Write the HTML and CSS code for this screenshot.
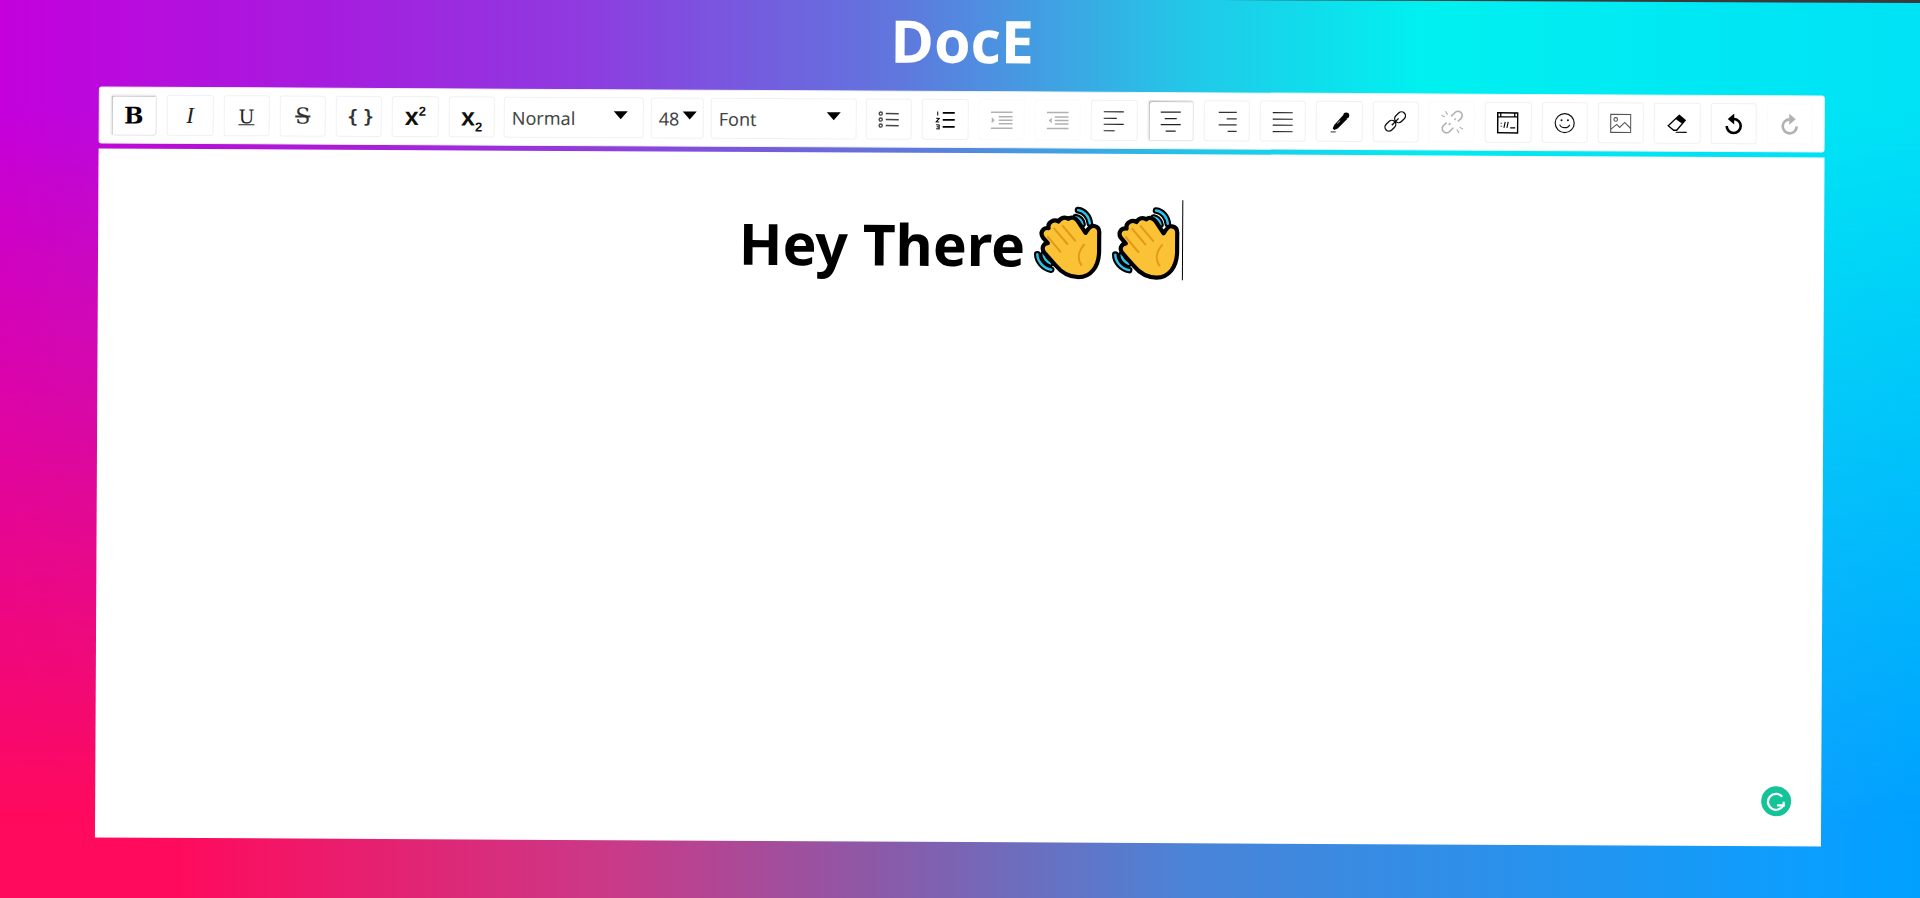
FILE: index.html
```html
<!DOCTYPE html>
<html lang="en">
<head>
    <meta charset="UTF-8">
    <title>DocE</title>
    <link rel="stylesheet" href="styles.css">
</head>
<body>
    <div class="top-edge"></div>
    <div class="page">
        <h1>DocE</h1>
        <div class="toolbar">
            <span class="opt active"><b class="ico-b">B</b></span>
            <span class="opt"><i class="ico-i">I</i></span>
            <span class="opt"><span class="ico-u">U</span></span>
            <span class="opt"><span class="ico-s">S</span></span>
            <span class="opt"><span class="ico-code">{ }</span></span>
            <span class="opt"><span class="ico-x">x<sup>2</sup></span></span>
            <span class="opt"><span class="ico-x">x<sub>2</sub></span></span>
            <span class="drop drop-block">Normal<span class="caret"></span></span>
            <span class="drop drop-size">48<span class="caret"></span></span>
            <span class="drop drop-font">Font<span class="caret"></span></span>

            <span class="opt">
                <svg class="icon" viewBox="0 0 22 18" stroke="#444" fill="none" stroke-width="1.3">
                    <circle cx="3" cy="3" r="1.6"/><circle cx="3" cy="9" r="1.6"/><circle cx="3" cy="15" r="1.6"/>
                    <path d="M8 3h13M8 9h13M8 15h13" stroke-width="1.5"/>
                </svg>
            </span>
            <span class="opt">
                <svg class="icon" viewBox="0 0 22 18" stroke="#000" fill="none">
                    <path d="M8 2h12M8 9h12M8 16h12" stroke-width="1.7"/>
                    <path d="M3 0.5v4M1.5 7.5h3l-3 3.5h3M1.5 14h3v4h-3M2 16h2" stroke-width="1"/>
                </svg>
            </span>
            <span class="opt off">
                <svg class="icon" viewBox="0 0 22 18" stroke="#000" fill="none" stroke-width="1.5">
                    <path d="M0 1h22M8 5.500h14M8 9h14M8 12.500h14M0 17h22"/>
                    <path d="M1 6l3 3-3 3z" fill="#000" stroke="none"/>
                </svg>
            </span>
            <span class="opt off">
                <svg class="icon" viewBox="0 0 22 18" stroke="#000" fill="none" stroke-width="1.5">
                    <path d="M0 1h22M8 5.500h14M8 9h14M8 12.500h14M0 17h22"/>
                    <path d="M5 6l-3 3 3 3z" fill="#000" stroke="none"/>
                </svg>
            </span>
            <span class="opt">
                <svg class="icon" viewBox="0 0 22 22" stroke="#222" fill="none" stroke-width="1.2">
                    <path d="M1 2h20M1 8.500h13M1 14.500h20M1 21h11"/>
                </svg>
            </span>
            <span class="opt active">
                <svg class="icon" viewBox="0 0 22 22" stroke="#222" fill="none" stroke-width="1.2">
                    <path d="M1 2h20M5 8.500h12M1 14.500h20M6 21h10"/>
                </svg>
            </span>
            <span class="opt">
                <svg class="icon" viewBox="0 0 22 22" stroke="#333" fill="none" stroke-width="1.3">
                    <path d="M3 2h18M11 8.500h10M3 14.500h18M12 21h9"/>
                </svg>
            </span>
            <span class="opt">
                <svg class="icon" viewBox="0 0 22 22" stroke="#222" fill="none" stroke-width="1.2">
                    <path d="M1 2h20M1 8.500h20M1 14.500h20M1 21h20"/>
                </svg>
            </span>
            <span class="opt">
                <svg class="icon" viewBox="0 0 22 22">
                    <path d="M14.500 4l4 4-9.500 9.500-3.500 1.500-1.500-1.500 1.500-3.500z" fill="#000"/>
                    <circle cx="17.500" cy="4.500" r="3"/>
                    <path d="M8.500 12.500l3-3" stroke="#fff" stroke-width="0.800"/>
                    <path d="M2 21h5" stroke="#555" stroke-width="1.200"/>
                </svg>
            </span>
            <span class="opt">
                <svg class="icon large" viewBox="0 0 22 22" stroke="#111" fill="none" stroke-width="1.200">
                    <rect x="1.500" y="11" width="10.500" height="7" rx="3.500" transform="rotate(-45 6.750 14.500)"/>
                    <rect x="10" y="3.500" width="10.500" height="7" rx="3.500" transform="rotate(-45 15.250 7)"/>
                    <path d="M8 14l6-6"/>
                </svg>
            </span>
            <span class="opt off">
                <svg class="icon large" viewBox="0 0 22 22" stroke="#000" fill="none" stroke-width="1.400">
                    <path d="M10 6l3-3a3.500 3.500 0 0 1 6 4.500l-3 3M12 16l-3 3a3.500 3.500 0 0 1-6-4.500l3-3M8 13.500l1.500-1.500M13 9l1-1"/>
                    <path d="M5 1.500l2 3M1.500 5l3 1.500M17 20.500l-2-3M20.500 17l-3-1.500" stroke-width="1"/>
                </svg>
            </span>
            <span class="opt">
                <svg class="icon" viewBox="0 0 22 22" stroke="#000" fill="none">
                    <rect x="1" y="1" width="20" height="20" stroke-width="1.500"/>
                    <path d="M1 5h20M4 1v4M18 1v4" stroke-width="1.300"/>
                    <path d="M4.500 11v.8M4.500 14v.8M8.500 10l-1.300 6M11.500 10l-1.300 6" stroke-width="1.100"/>
                    <path d="M13.500 16h5" stroke-width="1.300"/>
                </svg>
            </span>
            <span class="opt">
                <svg class="icon" viewBox="0 0 22 22" stroke="#111" fill="none" stroke-width="1.200">
                    <circle cx="11" cy="11" r="9.500"/>
                    <path d="M6 12.500c1.500 4 8.500 4 10 0"/>
                    <circle cx="7.800" cy="8" r="1" fill="#111" stroke="none"/>
                    <circle cx="14.200" cy="8" r="1" fill="#111" stroke="none"/>
                </svg>
            </span>
            <span class="opt">
                <svg class="icon" viewBox="0 0 22 22" stroke="#555" fill="none" stroke-width="1.100">
                    <rect x="1" y="2" width="20" height="18"/>
                    <circle cx="6" cy="7" r="1.800"/>
                    <path d="M1 17l6-5 3 3 5-5 6 6"/>
                </svg>
            </span>
            <span class="opt">
                <svg class="icon" viewBox="0 0 22 22">
                    <path d="M13.500 2.500l6 5-3 3.500-7-5z" fill="#000"/>
                    <path d="M13.500 2.500l6 5-8.500 10h-3l-5.500-4.500z" fill="none" stroke="#000" stroke-width="1.300"/>
                    <path d="M10 19.500h11" stroke="#000" stroke-width="1.200"/>
                </svg>
            </span>
            <span class="opt">
                <svg class="icon" viewBox="0 0 22 22" fill="none">
                    <path d="M11 6a7 7 0 1 1-7 7" stroke="#000" stroke-width="2.600"/>
                    <path d="M11.500 0.500v11L5 6z" fill="#000"/>
                </svg>
            </span>
            <span class="opt off">
                <svg class="icon" viewBox="0 0 22 22" fill="none">
                    <path d="M11 6a7 7 0 1 0 7 7" stroke="#000" stroke-width="2.600"/>
                    <path d="M10.500 0.500v11L17 6z" fill="#000"/>
                </svg>
            </span>
        </div>

        <div class="editor">
            <p class="line">
                <span class="hey">Hey There</span>
                <svg class="wave" viewBox="0 0 200 212">
                    <g id="hand" fill="none" stroke-linecap="round" stroke-linejoin="round">
                        <path d="M128 13c18 2 32 18 34 38M121 33c10 2 18 10 20 20" stroke="#000" stroke-width="19"/>
                        <path d="M128 13c18 2 32 18 34 38M121 33c10 2 18 10 20 20" stroke="#2dc3ec" stroke-width="7"/>
                        <path d="M12 140c0 20 18 40 40 44M30 140c0 10 8 22 20 26" stroke="#000" stroke-width="19"/>
                        <path d="M12 140c0 20 18 40 40 44M30 140c0 10 8 22 20 26" stroke="#2dc3ec" stroke-width="7"/>
                        <path d="M100 38C110 30 122 36 128 45L150 78C155 70 163 55 175 58C188 60 190 72 189 82L189 130C189 175 165 205 130 205C100 205 80 190 65 172L32 135C22 122 30 108 42 108L28 92C18 78 28 62 44 65C40 48 60 38 72 46C78 34 92 32 100 38Z" fill="#fcc236" stroke="#000" stroke-width="12"/>
                        <path d="M84 58l36 42M60 66l38 44M42 90l36 42M146 112c-16 18-20 40-8 58" stroke="#e39a1c" stroke-width="6"/>
                    </g>
                </svg>
                <svg class="wave" viewBox="0 0 200 212">
                    <use href="#hand"/>
                </svg>
                <span class="cursor"></span>
            </p>
            <span class="grammarly">
                <svg viewBox="0 0 30 30" fill="none" stroke="#fff" stroke-width="2.200">
                    <path d="M21 10.500a8 8 0 1 0 1 8.500h-6"/>
                    <path d="M22.500 15.500v5" />
                </svg>
            </span>
        </div>
    </div>
</body>
</html>
```

FILE: styles.css
```css
html, body { margin: 0; height: 898px; overflow: hidden; }
body {
    font-family: "Noto Sans", "Open Sans", sans-serif;
    position: relative;
    background: linear-gradient(90deg, #ff0a5c 0, #ff0a5c 9%, #c93a88 32%, #8a5aa8 46%, #4a84d8 62%, #0a9fff 95%, #00a0ff 100%);
}
/* top half of the background, faded into the bottom half */
body::before {
    content: "";
    position: absolute;
    inset: 0;
    background: linear-gradient(90deg, #c400dc 0, #a81ade 16%, #8f3ae0 30%, #5f78dd 47%, #22c8e8 62%, #00f0f0 74%, #00e2f6 100%);
    -webkit-mask-image: linear-gradient(180deg, #000 0, #000 12%, transparent 92%);
    mask-image: linear-gradient(180deg, #000 0, #000 12%, transparent 92%);
}
.top-edge {
    position: absolute;
    top: 0;
    right: 0;
    width: 700px;
    height: 3px;
    background: #3a3a3a;
    clip-path: polygon(0 0, 100% 0, 100% 100%);
}
.page {
    position: relative;
    height: 898px;
    padding-left: 97px;
    box-sizing: border-box;
    transform: rotate(0.3deg);
}
h1 {
    margin: 0;
    width: 1726px;
    height: 91px;
    line-height: 80px;
    text-align: center;
    color: #fff;
    font-family: "Open Sans", sans-serif;
    font-size: 59px;
    font-weight: 700;
}

.toolbar {
    width: 1726px;
    height: 57px;
    box-sizing: border-box;
    padding: 7px 0 0 11px;
    display: flex;
    align-items: flex-start;
    gap: 10px;
    background: #fff;
    border: 1px solid #f1f1f1;
    border-radius: 3px;
}
.opt {
    flex: none;
    width: 46.300px;
    height: 41px;
    box-sizing: border-box;
    display: flex;
    align-items: center;
    justify-content: center;
    background: #fff;
    border: 1px solid #f1f1f1;
    border-radius: 3px;
    color: #111;
}
.opt.active { box-shadow: 1px 1px 0 #bfbdbd inset; border-color: #e4e4e4; }
.opt.off { opacity: 0.3; }
.icon { width: 22px; height: 22px; display: block; }
.icon.large { width: 25px; height: 25px; }

.ico-b { font: 700 23px "DejaVu Serif", serif; color: #000; }
.ico-i { font: italic 400 23px "Liberation Serif", serif; color: #222; }
.ico-u { font: 400 19px "DejaVu Serif", serif; text-decoration: underline; color: #222; }
.ico-s { font: 400 22px "DejaVu Serif", serif; text-decoration: line-through; color: #333; }
.ico-code { font: 700 18px "DejaVu Sans Mono", monospace; color: #333; letter-spacing: -3px; }
.ico-x { font: 700 25px "Liberation Sans", sans-serif; color: #111; line-height: 1; }
.ico-x sup, .ico-x sub { font-size: 13px; line-height: 0; }

.drop {
    flex: none;
    height: 41px;
    box-sizing: border-box;
    display: flex;
    align-items: center;
    justify-content: space-between;
    margin-left: -1px;
    padding: 0 15px 0 7px;
    background: #fff;
    border: 1px solid #f1f1f1;
    border-radius: 3px;
    font-size: 18px;
    color: #444;
}
.drop-block { width: 140px; }
.drop-size { width: 53px; padding-right: 6px; margin-left: -3px; }
.drop-font { width: 146px; margin-left: -3px; margin-right: -1px; }
.caret {
    width: 0;
    height: 0;
    margin-bottom: 6px;
    border-left: 7px solid transparent;
    border-right: 7px solid transparent;
    border-top: 8px solid #000;
}

.editor {
    position: relative;
    width: 1726px;
    height: 689px;
    margin-top: 5px;
    background: #fff;
}
.line {
    margin: 0;
    padding-top: 46px;
    display: flex;
    align-items: flex-start;
    justify-content: center;
    gap: 8px;
    font-size: 57px;
    font-weight: 700;
    line-height: 80px;
    color: #000;
}
.hey { margin-top: 5px; }
.wave { width: 70px; height: 74px; flex: none; margin-top: 6px; }
.cursor { width: 1px; height: 80px; margin-left: -7px; background: #000; }
.grammarly {
    position: absolute;
    right: 30px;
    bottom: 30px;
    width: 30px;
    height: 30px;
    border-radius: 50%;
    background: #15c39a;
}
.grammarly svg { width: 30px; height: 30px; display: block; }
```
